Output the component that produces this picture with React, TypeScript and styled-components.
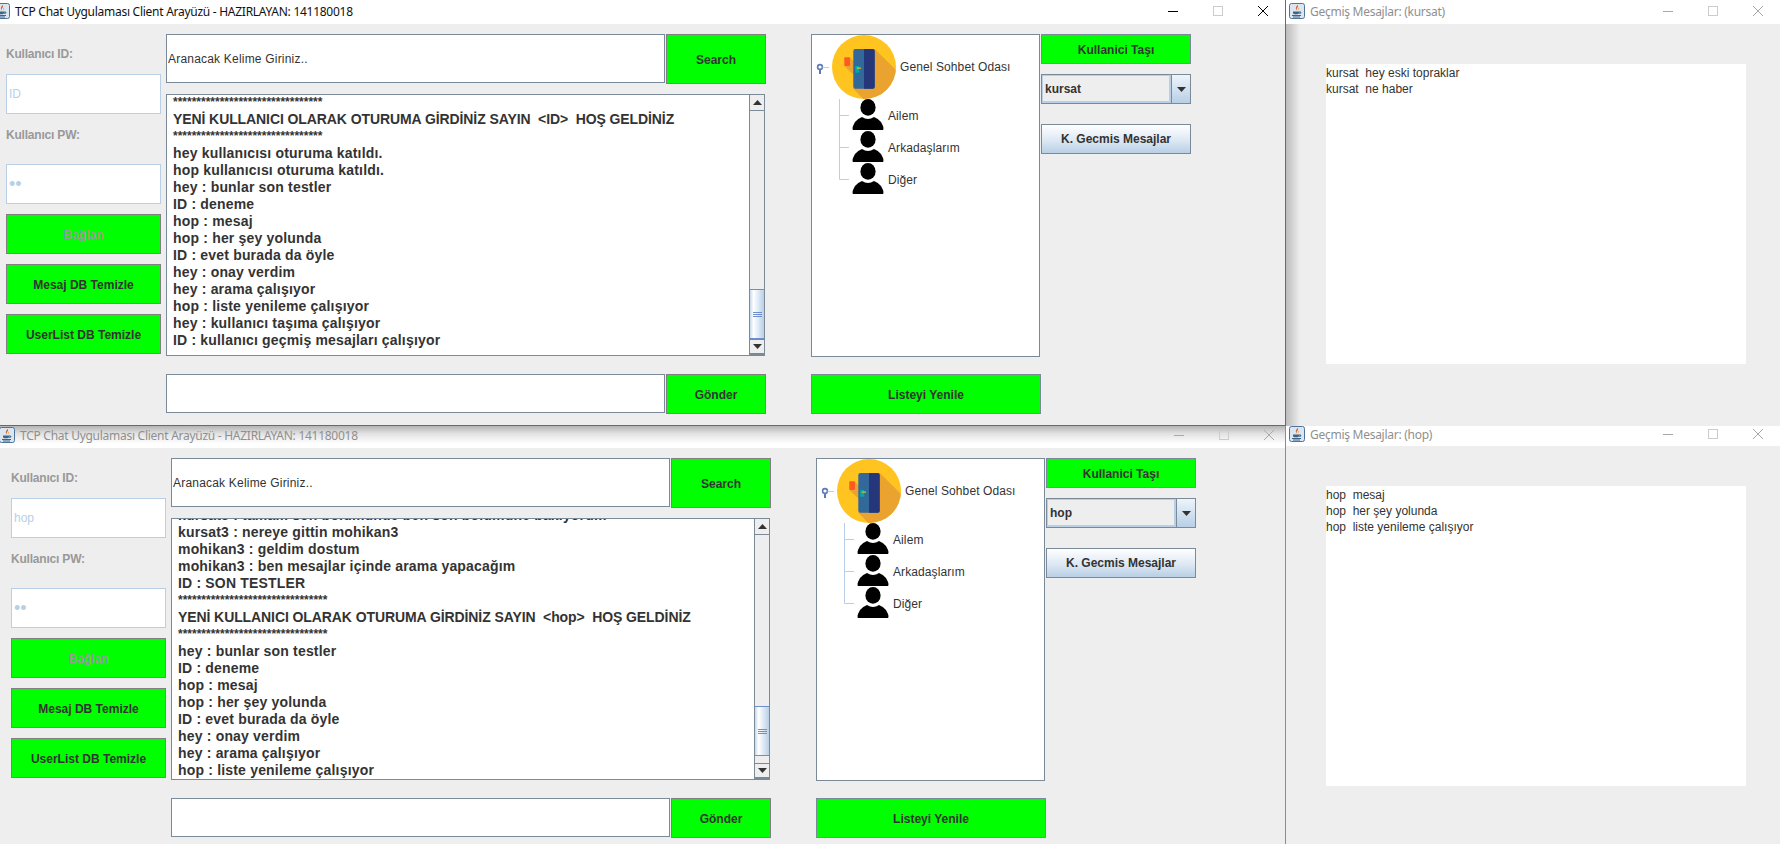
import styled, { createGlobalStyle } from "styled-components";

const GREEN = "#00ff00";
const OCEAN = "#7a8a99";
const PALE = "#b8cfe5";
const BG = "#eeeeee";

const GlobalStyle = createGlobalStyle`
  html, body {
    margin: 0;
    padding: 0;
    background: ${BG};
    overflow: hidden;
  }
  * {
    box-sizing: border-box;
  }
`;

const Desktop = styled.div`
  width: 1780px;
  height: 844px;
  display: grid;
  grid-template-columns: 1286px 494px;
  grid-template-rows: 426px 418px;
  overflow: hidden;
  font-family: "Liberation Sans", Arial, sans-serif;
  color: #333333;
`;

const Frame = styled.div<{ $active?: boolean; $seam?: boolean }>`
  display: flex;
  flex-direction: column;
  overflow: hidden;
  min-width: 0;
  background: ${BG};
  ${(p) => (p.$active ? "border-right: 1px solid #1a7fcf; border-bottom: 1px solid #1a7fcf;" : "")}
  ${(p) => (p.$seam ? "margin-left: -1px; border-left: 1px solid #8c8c8c;" : "")}
`;

const TitleBar = styled.div<{ $height: number; $lift: number; $shaded?: boolean; $inset: number }>`
  flex: none;
  height: ${(p) => p.$height}px;
  display: flex;
  align-items: center;
  gap: 5px;
  margin-right: ${(p) => -p.$inset}px;
  padding-left: ${(p) => p.$inset}px;
  padding-bottom: ${(p) => p.$lift}px;
  background: ${(p) =>
    p.$shaded ? "linear-gradient(#b4b4b4 0%, #e2e2e2 35%, #ffffff 80%)" : "#ffffff"};
`;

const TitleText = styled.span<{ $dim?: boolean }>`
  font-family: "Noto Sans", "Open Sans", sans-serif;
  font-size: 12px;
  letter-spacing: -0.27px;
  white-space: nowrap;
  color: ${(p) => (p.$dim ? "#8f8f8f" : "#111111")};
`;

const AppIcon = styled.svg<{ $shift: number }>`
  flex: none;
  width: 16px;
  height: 16px;
  margin-left: ${(p) => p.$shift}px;
`;

const Controls = styled.div`
  display: flex;
  margin-left: auto;
  height: 100%;
`;

const ControlBox = styled.div`
  width: 45px;
  display: flex;
  align-items: center;
  justify-content: center;
`;

const Body = styled.div<{ $inset: number }>`
  flex: 1;
  display: flex;
  align-items: flex-start;
  padding: 10px 0 0 ${(p) => 6 + p.$inset}px;
`;

const LoginColumn = styled.div`
  flex: none;
  width: 155px;
  display: flex;
  flex-direction: column;
`;

const FieldLabel = styled.div<{ $height: number; $after?: number }>`
  height: ${(p) => p.$height}px;
  margin-bottom: ${(p) => p.$after ?? 0}px;
  display: flex;
  align-items: center;
  font-size: 12px;
  font-weight: bold;
  letter-spacing: -0.2px;
  color: #999999;
`;

const LoginField = styled.div<{ $secret?: boolean }>`
  height: 40px;
  background: #ffffff;
  border: 1px solid ${PALE};
  padding-left: 2px;
  display: flex;
  align-items: center;
  font-size: ${(p) => (p.$secret ? 18 : 12)}px;
  color: ${PALE};
`;

const GreenButton = styled.div<{ $height: number; $muted?: boolean; $blue?: boolean }>`
  height: ${(p) => p.$height}px;
  background: ${GREEN};
  border: 1px solid ${(p) => (p.$blue ? OCEAN : "#808080")};
  padding-top: 1px;
  display: flex;
  align-items: center;
  justify-content: center;
  font-size: 12px;
  font-weight: bold;
  white-space: nowrap;
  color: ${(p) => (p.$muted ? "#9a9a9a" : "#333333")};
`;

const StackedButtons = styled.div`
  display: flex;
  flex-direction: column;
  gap: 10px;
  margin-top: 10px;
`;

const ChatColumn = styled.div`
  flex: none;
  width: 600px;
  margin-left: 5px;
  display: flex;
  flex-direction: column;
`;

const InputRow = styled.div<{ $height: number; $top?: number }>`
  height: ${(p) => p.$height}px;
  margin-top: ${(p) => p.$top ?? 0}px;
  display: grid;
  grid-template-columns: 499px 100px;
  gap: 1px;
`;

const TextInput = styled.div<{ $short?: boolean }>`
  height: ${(p) => (p.$short ? 39 : 49)}px;
  background: #ffffff;
  border: 1px solid ${OCEAN};
  padding: 1px 0 0 1px;
  display: flex;
  align-items: center;
  font-size: 12px;
  letter-spacing: 0.2px;
  color: #333333;
`;

const MessageBox = styled.div`
  height: 262px;
  margin-top: 10px;
  margin-right: 1px;
  display: flex;
  background: #ffffff;
  border: 1px solid ${OCEAN};
  border-right: none;
  overflow: hidden;
`;

const Messages = styled.div<{ $bottom: number }>`
  flex: 1;
  min-width: 0;
  display: flex;
  flex-direction: column;
  justify-content: flex-end;
  overflow: hidden;
  padding: 0 0 ${(p) => p.$bottom}px 6px;
`;

const MessageLine = styled.div`
  flex: none;
  height: 17px;
  line-height: 17px;
  font-size: 14px;
  font-weight: bold;
  letter-spacing: 0.18px;
  white-space: pre;
  color: #333333;
`;

const StarLine = styled(MessageLine)`
  font-size: 12px;
  letter-spacing: 0;
`;

const Headline = styled(MessageLine)`
  letter-spacing: -0.09px;
`;

const ScrollBar = styled.div`
  flex: none;
  width: 16px;
  display: flex;
  flex-direction: column;
  background: ${BG};
  border-left: 1px solid ${OCEAN};
  border-right: 1px solid ${OCEAN};
`;

const ScrollArrow = styled.div`
  flex: none;
  height: 16px;
  display: flex;
  align-items: center;
  justify-content: center;
  border-bottom: 1px solid ${OCEAN};
  &:last-child {
    border-top: 1px solid ${OCEAN};
    border-bottom: 2px solid ${OCEAN};
  }
`;

const ScrollGap = styled.div<{ $height?: number }>`
  flex: ${(p) => (p.$height === undefined ? 1 : "none")};
  height: ${(p) => p.$height ?? 0}px;
`;

const ScrollThumb = styled.div`
  flex: none;
  height: 50px;
  display: flex;
  flex-direction: column;
  align-items: center;
  justify-content: center;
  gap: 1px;
  border-top: 1px solid #6d8fd0;
  border-bottom: 1px solid #6d8fd0;
  background: linear-gradient(90deg, #c6d8ee, #ffffff 25%, #dfe9f5 60%, ${PALE});
`;

const GripLine = styled.div`
  width: 9px;
  height: 1px;
  background: #6d8fd0;
`;

const TreeColumn = styled.div`
  flex: none;
  width: 230px;
  margin-left: 45px;
  display: flex;
  flex-direction: column;
`;

const TreePanel = styled.div`
  height: 323px;
  margin-right: 1px;
  background: #ffffff;
  border: 1px solid ${OCEAN};
  display: flex;
  flex-direction: column;
`;

const RootNode = styled.div`
  height: 64px;
  display: flex;
  align-items: center;
  font-size: 12px;
  letter-spacing: 0.1px;
  color: #333333;
`;

const NodeLabel = styled.span<{ $gap: number; $drop?: number }>`
  margin-left: ${(p) => p.$gap}px;
  padding-top: ${(p) => p.$drop ?? 0}px;
  white-space: nowrap;
`;

const ChildNode = styled.div`
  height: 32px;
  display: flex;
  align-items: center;
  padding-left: 27px;
  font-size: 12px;
  letter-spacing: 0.1px;
  color: #333333;
`;

const ListButton = styled(GreenButton)`
  margin-top: 17px;
`;

const SideColumn = styled.div`
  flex: none;
  width: 150px;
  display: flex;
  flex-direction: column;
`;

const Combo = styled.div`
  height: 30px;
  margin-top: 10px;
  display: flex;
  border: 1px solid ${OCEAN};
`;

const ComboValue = styled.div`
  flex: 1;
  display: flex;
  align-items: center;
  padding-left: 2px;
  background: ${BG};
  border: 2px solid ${PALE};
  border-left-width: 1px;
  border-top-width: 1px;
  font-size: 12px;
  font-weight: bold;
  color: #333333;
`;

const ComboArrow = styled.div`
  flex: none;
  width: 19px;
  display: flex;
  align-items: center;
  justify-content: center;
  border-left: 1px solid ${OCEAN};
  background: linear-gradient(#eef4fa, ${PALE});
`;

const OceanButton = styled.div`
  height: 30px;
  margin-top: 20px;
  display: flex;
  align-items: center;
  justify-content: center;
  border: 1px solid ${OCEAN};
  background: linear-gradient(#ffffff, #dde8f3 55%, ${PALE});
  font-size: 12px;
  font-weight: bold;
  color: #333333;
`;

const HistoryBody = styled.div<{ $shadow?: boolean }>`
  flex: 1;
  padding: 40px 0 0 40px;
  ${(p) =>
    p.$shadow ? `background: linear-gradient(90deg, #bcbcbc, ${BG} 14px);` : ""}
`;

const HistoryPanel = styled.div`
  width: 420px;
  height: 300px;
  background: #ffffff;
  padding-top: 1px;
  font-size: 12px;
  line-height: 16px;
  color: #333333;
  white-space: pre;
`;

function JavaIcon({ shift }: { shift: number }) {
  return (
    <AppIcon $shift={shift} viewBox="0 0 16 16">
      <rect x="0.5" y="0.5" width="15" height="15" rx="2" fill="#dbe6f1" stroke="#4f7398" />
      <path d="M8.5 2 C10.5 4 6.5 5 8 7.5 C6 6 7 4 8.5 2 Z" fill="#e2561d" />
      <path d="M10 4.5 C10.8 5.5 9 6.5 9.5 7.5 C8.6 6.6 9.2 5.4 10 4.5 Z" fill="#f29a2e" />
      <path d="M4 8.5 H10 V10 C10 11 9 11.3 7 11.3 C5 11.3 4 11 4 10 Z" fill="#3f6487" />
      <path d="M10 9 H11.8 V10.2 H10" fill="none" stroke="#3f6487" />
      <path d="M3 12.5 H12 M4 14 H11" stroke="#3f6487" />
    </AppIcon>
  );
}

function WindowButtons({ active }: { active?: boolean }) {
  const stroke = active ? "#000000" : "#a8a8a8";
  return (
    <Controls>
      <ControlBox>
        <svg width="10" height="10" viewBox="0 0 10 10">
          <path d="M0 5.5 H10" stroke={stroke} />
        </svg>
      </ControlBox>
      <ControlBox>
        <svg width="10" height="10" viewBox="0 0 10 10">
          <rect x="0.5" y="0.5" width="9" height="9" fill="none" stroke="#cccccc" />
        </svg>
      </ControlBox>
      <ControlBox>
        <svg width="10" height="10" viewBox="0 0 10 10">
          <path d="M0 0 L10 10 M10 0 L0 10" stroke={stroke} />
        </svg>
      </ControlBox>
    </Controls>
  );
}

function RoomIcon() {
  return (
    <svg width="64" height="64" viewBox="0 0 64 64" style={{ flex: "none" }}>
      <defs>
        <clipPath id="roomDisc">
          <circle cx="32" cy="32" r="32" />
        </clipPath>
      </defs>
      <circle cx="32" cy="32" r="32" fill="#ffc41f" />
      <g clipPath="url(#roomDisc)">
        <path d="M42.7 14 L70 41 L70 70 L37 70 L21.3 53.7 Z" fill="#e9a32e" />
        <path d="M12.3 31 L18 22.3 L24 30 L24 42 Z" fill="#e9a32e" />
      </g>
      <rect x="12.3" y="22.3" width="5.7" height="8.7" rx="1" fill="#ff5a1f" />
      <rect x="21.3" y="14" width="21.4" height="39.7" rx="2" fill="#33689a" />
      <path d="M32 14 H40.7 A2 2 0 0 1 42.7 16 V51.7 A2 2 0 0 1 40.7 53.7 H32 Z" fill="#26367a" />
      <rect x="23.3" y="31" width="4" height="6.7" fill="#00a8a8" />
      <rect x="24.7" y="32.6" width="4.4" height="1" fill="#ffc41f" />
    </svg>
  );
}

function PersonIcon() {
  return (
    <svg width="32" height="32" viewBox="0 0 32 32" style={{ flex: "none" }}>
      <path
        d="M0.8 31 Q0 29.5 1 27 L3 23 Q5 20 10 18 Q16 22 22 18 Q27 20 29 23 L31 27 Q32 29.5 31.2 31 Z"
        fill="#000000"
      />
      <ellipse cx="16" cy="8.4" rx="7.6" ry="8.4" fill="#000000" />
    </svg>
  );
}

function TreeHandle() {
  return (
    <svg width="20" height="64" viewBox="0 0 20 64" style={{ flex: "none" }}>
      <circle cx="8" cy="32" r="2.4" fill="#ffffff" stroke="#5c7cb8" strokeWidth="1.6" />
      <path d="M8 34 V39" stroke="#5c7cb8" strokeWidth="2" />
      <path d="M10.5 32.5 H17" stroke={PALE} />
    </svg>
  );
}

function TreeConnector({ last }: { last?: boolean }) {
  return (
    <svg width="13" height="32" viewBox="0 0 13 32" style={{ flex: "none" }}>
      <path d={last ? "M0.5 0 V16.5 H10" : "M0.5 0 V32 M0.5 16.5 H10"} fill="none" stroke={PALE} />
    </svg>
  );
}

function MiniArrow({ up }: { up?: boolean }) {
  return (
    <svg width="9" height="5" viewBox="0 0 9 5">
      <path d={up ? "M0 5 H9 L4.5 0 Z" : "M0 0 H9 L4.5 5 Z"} fill="#333333" />
    </svg>
  );
}

const STARS = "********************************";

function ChatLine({ text }: { text: string }) {
  if (text === STARS) return <StarLine>{text}</StarLine>;
  if (text.startsWith("YENİ")) return <Headline>{text}</Headline>;
  return <MessageLine>{text}</MessageLine>;
}

function ChatWindow({
  inset,
  active,
  user,
  combo,
  lines,
  bottom,
  tail,
}: {
  inset: number;
  active?: boolean;
  user: string;
  combo: string;
  lines: string[];
  bottom: number;
  tail: number;
}) {
  return (
    <Frame $active={active}>
      <TitleBar $height={active ? 24 : 22} $lift={active ? 2 : 4} $shaded={!active} $inset={inset}>
        <JavaIcon shift={-6} />
        <TitleText $dim={!active}>TCP Chat Uygulaması Client Arayüzü - HAZIRLAYAN: 141180018</TitleText>
        <WindowButtons active={active} />
      </TitleBar>
      <Body $inset={inset}>
        <LoginColumn>
          <FieldLabel $height={40}>Kullanıcı ID:</FieldLabel>
          <LoginField>{user}</LoginField>
          <FieldLabel $height={42} $after={8}>Kullanıcı PW:</FieldLabel>
          <LoginField $secret>••</LoginField>
          <StackedButtons>
            <GreenButton $height={40} $muted>Bağlan</GreenButton>
            <GreenButton $height={40}>Mesaj DB Temizle</GreenButton>
            <GreenButton $height={40}>UserList DB Temizle</GreenButton>
          </StackedButtons>
        </LoginColumn>
        <ChatColumn>
          <InputRow $height={50}>
            <TextInput>Aranacak Kelime Giriniz..</TextInput>
            <GreenButton $height={50}>Search</GreenButton>
          </InputRow>
          <MessageBox>
            <Messages $bottom={bottom}>
              {lines.map((line, i) => (
                <ChatLine key={i} text={line} />
              ))}
            </Messages>
            <ScrollBar>
              <ScrollArrow><MiniArrow up /></ScrollArrow>
              <ScrollGap />
              <ScrollThumb>
                <GripLine />
                <GripLine />
                <GripLine />
              </ScrollThumb>
              <ScrollGap $height={tail} />
              <ScrollArrow><MiniArrow /></ScrollArrow>
            </ScrollBar>
          </MessageBox>
          <InputRow $height={40} $top={18}>
            <TextInput $short />
            <GreenButton $height={40}>Gönder</GreenButton>
          </InputRow>
        </ChatColumn>
        <TreeColumn>
          <TreePanel>
            <RootNode>
              <TreeHandle />
              <RoomIcon />
              <NodeLabel $gap={4}>Genel Sohbet Odası</NodeLabel>
            </RootNode>
            {["Ailem", "Arkadaşlarım", "Diğer"].map((name, i) => (
              <ChildNode key={name}>
                <TreeConnector last={i === 2} />
                <PersonIcon />
                <NodeLabel $gap={4} $drop={2}>{name}</NodeLabel>
              </ChildNode>
            ))}
          </TreePanel>
          <ListButton $height={40} $blue>Listeyi Yenile</ListButton>
        </TreeColumn>
        <SideColumn>
          <GreenButton $height={30} $blue>Kullanici Taşı</GreenButton>
          <Combo>
            <ComboValue>{combo}</ComboValue>
            <ComboArrow><MiniArrow /></ComboArrow>
          </Combo>
          <OceanButton>K. Gecmis Mesajlar</OceanButton>
        </SideColumn>
      </Body>
    </Frame>
  );
}

function HistoryWindow({
  name,
  lines,
  upper,
}: {
  name: string;
  lines: string[];
  upper?: boolean;
}) {
  return (
    <Frame $seam={!upper}>
      <TitleBar $height={upper ? 24 : 20} $lift={upper ? 2 : 4} $inset={0}>
        <JavaIcon shift={3} />
        <TitleText $dim>Geçmiş Mesajlar: ({name})</TitleText>
        <WindowButtons />
      </TitleBar>
      <HistoryBody $shadow={upper}>
        <HistoryPanel>{lines.join("\n")}</HistoryPanel>
      </HistoryBody>
    </Frame>
  );
}

const TOP_LINES = [
  STARS,
  "YENİ KULLANICI OLARAK OTURUMA GİRDİNİZ SAYIN  <ID>  HOŞ GELDİNİZ",
  STARS,
  "hey kullanıcısı oturuma katıldı.",
  "hop kullanıcısı oturuma katıldı.",
  "hey : bunlar son testler",
  "ID : deneme",
  "hop : mesaj",
  "hop : her şey yolunda",
  "ID : evet burada da öyle",
  "hey : onay verdim",
  "hey : arama çalışıyor",
  "hop : liste yenileme çalışıyor",
  "hey : kullanıcı taşıma çalışıyor",
  "ID : kullanıcı geçmiş mesajları çalışıyor",
];

const BOTTOM_LINES = [
  "kursat3 : tamam son bölümünde ben son bölümüne bakıyorum",
  "kursat3 : nereye gittin mohikan3",
  "mohikan3 : geldim dostum",
  "mohikan3 : ben mesajlar içinde arama yapacağım",
  "ID : SON TESTLER",
  STARS,
  "YENİ KULLANICI OLARAK OTURUMA GİRDİNİZ SAYIN  <hop>  HOŞ GELDİNİZ",
  STARS,
  "hey : bunlar son testler",
  "ID : deneme",
  "hop : mesaj",
  "hop : her şey yolunda",
  "ID : evet burada da öyle",
  "hey : onay verdim",
  "hey : arama çalışıyor",
  "hop : liste yenileme çalışıyor",
];

export default function App() {
  return (
    <>
      <GlobalStyle />
      <Desktop>
        <ChatWindow inset={0} active user="ID" combo="kursat" lines={TOP_LINES} bottom={6} tail={0} />
        <HistoryWindow upper name="kursat" lines={["kursat  hey eski topraklar", "kursat  ne haber"]} />
        <ChatWindow inset={5} user="hop" combo="hop" lines={BOTTOM_LINES} bottom={0} tail={7} />
        <HistoryWindow
          name="hop"
          lines={["hop  mesaj", "hop  her şey yolunda", "hop  liste yenileme çalışıyor"]}
        />
      </Desktop>
    </>
  );
}
